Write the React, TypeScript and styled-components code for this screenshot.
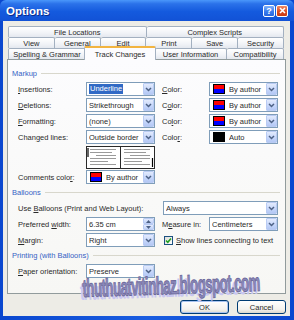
import React from 'react'
import styled, { createGlobalStyle, css } from 'styled-components'

const GlobalStyle = createGlobalStyle`
  html, body {
    margin: 0;
    padding: 0;
    background: #ffffff;
  }
  body {
    font-family: 'Liberation Sans', Arial, sans-serif;
    font-size: 7.5px;
    color: #2a2a2a;
  }
`

const Window = styled.div`
  position: relative;
  width: 294px;
  height: 320px;
  display: flex;
  flex-direction: column;
  background: linear-gradient(90deg, #0a47cf, #1a5de0 50%, #0a47cf);
  overflow: hidden;
`

const TitleBar = styled.div`
  height: 21px;
  flex: 0 0 21px;
  display: flex;
  align-items: center;
  padding: 0 6px 0 6px;
  background: linear-gradient(#4a97fb 0%, #2b72ea 18%, #145ade 55%, #1252d6 100%);
  border-radius: 6px 6px 0 0;
`

const Title = styled.span`
  flex: 1;
  color: #ffffff;
  font-weight: bold;
  font-size: 11.5px;
  text-shadow: 1px 1px 0 #0b2b8c;
`

const TitleButtons = styled.div`
  display: flex;
  gap: 1px;
`

const CaptionButton = styled.span<{ $close?: boolean }>`
  box-sizing: border-box;
  width: 12px;
  height: 12px;
  border: 1px solid #ffffff;
  border-radius: 2px;
  display: flex;
  align-items: center;
  justify-content: center;
  color: #ffffff;
  font-weight: bold;
  font-size: 9px;
  background: ${p =>
    p.$close
      ? 'linear-gradient(#ef8a66, #dc4b22 55%, #c83a14)'
      : 'linear-gradient(#7fb0fb, #3b7cee 55%, #2765de)'};
`

const Body = styled.div`
  flex: 1;
  margin: 0 4px 4px 3px;
  padding-top: 5px;
  background: #edece6;
  display: flex;
  flex-direction: column;
`

const TabStrip = styled.div`
  width: 276px;
  margin-left: 5px;
  display: flex;
  flex-direction: column;
`

const TabRow = styled.div`
  display: flex;
  align-items: flex-end;
  height: 11px;
`

const Tab = styled.div<{ $w?: number; $active?: boolean }>`
  box-sizing: border-box;
  flex: ${p => (p.$w ? `0 0 ${p.$w + (p.$active ? 3 : 0)}px` : '1 1 0')};
  height: 11px;
  display: flex;
  align-items: center;
  justify-content: center;
  white-space: nowrap;
  color: #2a2a2a;
  border-top: 1px solid #a3b0c0;
  border-right: 1px solid #a3b0c0;
  border-radius: 2px 2px 0 0;
  background: linear-gradient(#ffffff, #f1f3f7 60%, #e4e8ef);

  &:first-child {
    border-left: 1px solid #a3b0c0;
  }

  ${p =>
    p.$active &&
    css`
      position: relative;
      z-index: 1;
      height: 14px;
      margin: -2px -1px -1px -2px;
      border-left: 1px solid #a3b0c0;
      border-top: 2px solid #f2b440;
      background: #fcfcfe;
    `}
`

const Panel = styled.div`
  box-sizing: border-box;
  height: 235px;
  flex: 0 0 235px;
  margin: 0 4px;
  padding: 6px 5px 0 10px;
  border: 1px solid #919b9c;
  background: linear-gradient(#fcfcfe, #f7f7f4);
  display: flex;
  flex-direction: column;
`

const Heading = styled.div`
  height: 15px;
  margin-left: -6px;
  display: flex;
  align-items: center;
  gap: 4px;
  color: #3562c4;

  &::after {
    content: '';
    flex: 1;
    height: 1px;
    background: #d8d7cc;
  }
`

const Row = styled.div<{ $cols?: string }>`
  height: 16px;
  display: grid;
  grid-template-columns: ${p => p.$cols ?? '68px 69px 54px 69px'};
  align-items: center;
  white-space: nowrap;
`

const Label = styled.span<{ $inset?: number }>`
  padding-left: ${p => p.$inset ?? 0}px;
`

const Key = styled.span`
  text-decoration: underline;
`

const Combo = styled.div<{ $w: number }>`
  box-sizing: border-box;
  width: ${p => p.$w}px;
  height: 14px;
  border: 1px solid #7f9db9;
  background: #ffffff;
  display: flex;
  align-items: center;
  padding-left: 2px;
`

const Value = styled.span<{ $selected?: boolean }>`
  flex: 1;
  display: flex;
  align-items: center;
  overflow: hidden;

  ${p =>
    p.$selected &&
    css`
      flex: 0 0 auto;
      margin-right: auto;
      padding: 0 1px;
      line-height: 10px;
      background: #316ac5;
      color: #ffffff;
    `}
`

const Swatch = styled.span<{ $fill: string }>`
  box-sizing: border-box;
  width: 12px;
  height: 10px;
  margin: 0 4px 0 1px;
  border: 1px solid #000;
  background: ${p => p.$fill};
`

const DropButton = styled.span`
  box-sizing: border-box;
  width: 11px;
  height: 12px;
  display: flex;
  align-items: center;
  justify-content: center;
  border: 1px solid #b9cbf3;
  border-radius: 1px;
  background: linear-gradient(#e3ebfd, #c4d5fa 60%, #b4c8f4);
`

const SpinButtons = styled.span`
  width: 11px;
  height: 12px;
  display: flex;
  flex-direction: column;
`

const SpinHalf = styled.span`
  box-sizing: border-box;
  flex: 1;
  display: flex;
  align-items: center;
  justify-content: center;
  border: 1px solid #b9cbf3;
  border-radius: 1px;
  background: linear-gradient(#e3ebfd, #c0d2f8);
`

const PreviewRow = styled.div`
  height: 23px;
  margin: 1px 0 0 68px;
`

const CheckLine = styled.label`
  grid-column: 3 / 5;
  display: flex;
  align-items: center;
  gap: 3px;
  padding-left: 9px;
`

const CheckBox = styled.span`
  box-sizing: border-box;
  width: 9px;
  height: 9px;
  border: 1px solid #1c5180;
  background: linear-gradient(135deg, #dcdcd7, #ffffff);
  display: flex;
  align-items: center;
  justify-content: center;
`

const ButtonBar = styled.div`
  display: flex;
  justify-content: flex-end;
  gap: 8px;
  margin-top: 6px;
  padding-right: 4px;
`

const Button = styled.button<{ $default?: boolean }>`
  box-sizing: border-box;
  width: 49px;
  height: 14px;
  padding: 0;
  font: inherit;
  color: #2a2a2a;
  border: 1px solid #003c74;
  border-radius: 3px;
  background: linear-gradient(#ffffff, #f3f2ee 70%, #dcd8cc);
  box-shadow: ${p => (p.$default ? 'inset 0 0 0 1px #a9c3f0' : 'none')};
`

const Watermark = styled.div`
  position: absolute;
  left: 82px;
  top: 276px;
  font-family: 'Liberation Sans', Arial, sans-serif;
  font-weight: bold;
  font-size: 25px;
  line-height: 1;
  letter-spacing: -1px;
  white-space: nowrap;
  color: #8e8bbb;
  -webkit-text-stroke: 1px #6d6a9c;
  text-shadow: -5px 3px 0 #c9c7f1;
  transform-origin: left top;
  transform: rotate(-2deg) scaleX(0.53);
  pointer-events: none;
`

const Chevron = () => (
  <svg width="7" height="5" viewBox="0 0 7 5">
    <path d="M1 1 L3.5 3.5 L6 1" fill="none" stroke="#4d6185" strokeWidth="1.5" />
  </svg>
)

const Arrow = ({ up }: { up?: boolean }) => (
  <svg width="5" height="3" viewBox="0 0 5 3">
    <path d={up ? 'M0 3 L2.5 0 L5 3 Z' : 'M0 0 L2.5 3 L5 0 Z'} fill="#4d6185" />
  </svg>
)

const AUTHOR = 'linear-gradient(#ff0000 50%, #0000ff 50%)'

type DropProps = {
  w: number
  value: string
  swatch?: string
  selected?: boolean
}

const Dropdown = ({ w, value, swatch, selected }: DropProps) => (
  <Combo $w={w}>
    {swatch && <Swatch $fill={swatch} />}
    <Value $selected={selected}>{value}</Value>
    <DropButton>
      <Chevron />
    </DropButton>
  </Combo>
)

// small page-layout thumbnails for the changed-lines setting
const LinesPreview = () => {
  const lines = [
    [4, 30],
    [4, 26],
    [10, 30],
    [4, 30],
    [4, 22],
    [4, 30]
  ]
  return (
    <svg width="69" height="23" viewBox="0 0 69 23">
      <rect x="0.5" y="0.5" width="34" height="22" fill="#fff" stroke="#2a2a2a" />
      <rect x="34.5" y="0.5" width="34" height="22" fill="#fff" stroke="#2a2a2a" />
      {lines.map(([a, b], i) => (
        <line key={`l${i}`} x1={a} x2={b} y1={3.5 + i * 3} y2={3.5 + i * 3} stroke="#9a9a9a" />
      ))}
      {lines.map(([a, b], i) => (
        <line key={`r${i}`} x1={34 + a} x2={34 + b} y1={3.5 + i * 3} y2={3.5 + i * 3} stroke="#9a9a9a" />
      ))}
      <line x1="2" x2="2" y1="2" y2="11" stroke="#000" strokeWidth="1.2" />
      <line x1="66.5" x2="66.5" y1="12" y2="21" stroke="#000" strokeWidth="1.2" />
    </svg>
  )
}

const App = () => (
  <>
    <GlobalStyle />
    <Window>
      <TitleBar>
        <Title>Options</Title>
        <TitleButtons>
          <CaptionButton>?</CaptionButton>
          <CaptionButton $close>
            <svg width="7" height="7" viewBox="0 0 7 7">
              <path d="M1 1 L6 6 M6 1 L1 6" stroke="#fff" strokeWidth="1.6" />
            </svg>
          </CaptionButton>
        </TitleButtons>
      </TitleBar>

      <Body>
        <TabStrip>
          <TabRow>
            <Tab>File Locations</Tab>
            <Tab>Complex Scripts</Tab>
          </TabRow>
          <TabRow>
            <Tab>View</Tab>
            <Tab>General</Tab>
            <Tab>Edit</Tab>
            <Tab>Print</Tab>
            <Tab>Save</Tab>
            <Tab>Security</Tab>
          </TabRow>
          <TabRow>
            <Tab $w={78}>Spelling &amp; Grammar</Tab>
            <Tab $w={69} $active>
              Track Changes
            </Tab>
            <Tab $w={72}>User Information</Tab>
            <Tab $w={57}>Compatibility</Tab>
          </TabRow>
        </TabStrip>

        <Panel>
          <Heading>Markup</Heading>
          <Row>
            <Label>
              <Key>I</Key>nsertions:
            </Label>
            <Dropdown w={69} value="Underline" selected />
            <Label $inset={7}>
              <Key>C</Key>olor:
            </Label>
            <Dropdown w={69} value="By author" swatch={AUTHOR} />
          </Row>
          <Row>
            <Label>
              <Key>D</Key>eletions:
            </Label>
            <Dropdown w={69} value="Strikethrough" />
            <Label $inset={7}>
              C<Key>o</Key>lor:
            </Label>
            <Dropdown w={69} value="By author" swatch={AUTHOR} />
          </Row>
          <Row>
            <Label>
              <Key>F</Key>ormatting:
            </Label>
            <Dropdown w={69} value="(none)" />
            <Label $inset={7}>
              Co<Key>l</Key>or:
            </Label>
            <Dropdown w={69} value="By author" swatch={AUTHOR} />
          </Row>
          <Row>
            <Label>
              Chan<Key>g</Key>ed lines:
            </Label>
            <Dropdown w={69} value="Outside border" />
            <Label $inset={7}>
              Colo<Key>r</Key>:
            </Label>
            <Dropdown w={69} value="Auto" swatch="#000" />
          </Row>
          <PreviewRow>
            <LinesPreview />
          </PreviewRow>
          <Row>
            <Label>
              Comments colo<Key>r</Key>:
            </Label>
            <Dropdown w={69} value="By author" swatch={AUTHOR} />
          </Row>

          <Heading>Balloons</Heading>
          <Row $cols="145px 115px">
            <Label>
              Use <Key>B</Key>alloons (Print and Web Layout):
            </Label>
            <Dropdown w={115} value="Always" />
          </Row>
          <Row>
            <Label>
              Preferred <Key>w</Key>idth:
            </Label>
            <Combo $w={69}>
              <Value>6.35 cm</Value>
              <SpinButtons>
                <SpinHalf>
                  <Arrow up />
                </SpinHalf>
                <SpinHalf>
                  <Arrow />
                </SpinHalf>
              </SpinButtons>
            </Combo>
            <Label $inset={7}>
              M<Key>e</Key>asure in:
            </Label>
            <Dropdown w={69} value="Centimeters" />
          </Row>
          <Row>
            <Label>
              <Key>M</Key>argin:
            </Label>
            <Dropdown w={69} value="Right" />
            <CheckLine>
              <CheckBox>
                <svg width="7" height="7" viewBox="0 0 7 7">
                  <path d="M1 3.5 L2.8 5.3 L6 1.5" fill="none" stroke="#21a121" strokeWidth="1.6" />
                </svg>
              </CheckBox>
              <span>
                <Key>S</Key>how lines connecting to text
              </span>
            </CheckLine>
          </Row>

          <Heading>Printing (with Balloons)</Heading>
          <Row>
            <Label>
              <Key>P</Key>aper orientation:
            </Label>
            <Dropdown w={69} value="Preserve" />
          </Row>
        </Panel>

        <ButtonBar>
          <Button $default>OK</Button>
          <Button>Cancel</Button>
        </ButtonBar>
      </Body>

      <Watermark>thuthuatvitinhaz.blogspot.com</Watermark>
    </Window>
  </>
)

export default App
